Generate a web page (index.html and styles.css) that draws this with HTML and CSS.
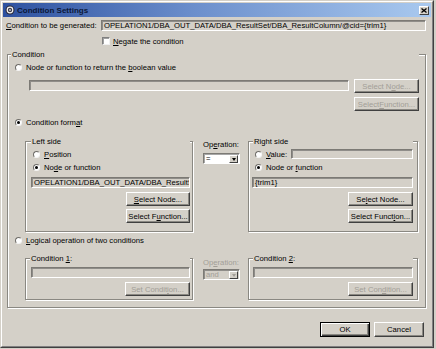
FILE: index.html
```html
<!DOCTYPE html>
<html>
<head>
<meta charset="utf-8">
<title>Condition Settings</title>
<link rel="stylesheet" href="styles.css">
</head>
<body>
<div class="window">
  <div class="frame">
    <div class="titlebar">
      <svg class="app-icon" width="10" height="10" viewBox="0 0 10 10">
        <circle cx="5" cy="5" r="4.5" fill="#2a2a3a"/>
        <circle cx="5" cy="5" r="3.4" fill="#f4f4f4"/>
        <circle cx="5" cy="5" r="2.2" fill="#3a3a4a"/>
        <circle cx="5" cy="5" r="1" fill="#c8c8d0"/>
      </svg>
      <span class="title">Condition Settings</span>
      <span class="close"><svg width="6" height="5" viewBox="0 0 6 5"><path d="M0.5 0.5 L5.5 4.5 M5.5 0.5 L0.5 4.5" stroke="#000" stroke-width="1.3"/></svg></span>
    </div>
    <div class="content">
      <div class="gen-grid">
        <span class="gen-label"><u>C</u>ondition to be generated:</span>
        <div class="field">OPELATION1/DBA_OUT_DATA/DBA_ResultSet/DBA_ResultColumn/@cid={trim1}</div>
        <span></span>
        <div class="check-row"><span class="checkbox"></span><span><u>N</u>egate the condition</span></div>
      </div>

      <div class="group cond-group">
        <div class="group-label cond-label">Condition</div>

        <div class="radio-row r1"><span class="radio"></span><span>Node or function to return the <u>b</u>oolean value</span></div>
        <div class="bool-row">
          <div class="field bool-field"></div>
          <div class="btn-col">
            <div class="btn disabled">Select N<u>o</u>de...</div>
            <div class="btn disabled">Select <u>F</u>unction...</div>
          </div>
        </div>

        <div class="radio-row r2"><span class="radio checked"></span><span>Condition form<u>a</u>t</span></div>
        <div class="side-row mid-row">
          <div class="group left-group">
            <div class="group-label">Left side</div>
            <div class="radio-row lr1"><span class="radio"></span><span><u>P</u>osition</span></div>
            <div class="radio-row lr2"><span class="radio checked"></span><span>No<u>d</u>e or function</span></div>
            <div class="field side-field">OPELATION1/DBA_OUT_DATA/DBA_ResultSet/DBA_ResultColumn/@cid={trim1}</div>
            <div class="btn-stack">
              <div class="btn w64"><span><u>S</u>elect Node...</span></div>
              <div class="btn w64"><span>Select F<u>u</u>nction...</span></div>
            </div>
          </div>
          <div class="op-col">
            <span>Op<u>e</u>ration:</span>
            <div class="combo"><span class="combo-text">=</span><span class="combo-btn"><span class="arrow"></span></span></div>
          </div>
          <div class="group right-group">
            <div class="group-label rlabel">Right side</div>
            <div class="value-row"><span class="radio"></span><span class="value-text"><u>V</u>alue:</span><div class="field value-field"></div></div>
            <div class="radio-row lr2"><span class="radio checked"></span><span>Node or <u>f</u>unction</span></div>
            <div class="field side-field">{trim1}</div>
            <div class="btn-stack">
              <div class="btn w65"><span>Se<u>l</u>ect Node...</span></div>
              <div class="btn w65"><span>Select Funct<u>i</u>on...</span></div>
            </div>
          </div>
        </div>

        <div class="radio-row r3"><span class="radio"></span><span><u>L</u>ogical operation of two conditions</span></div>
        <div class="side-row bot-row">
          <div class="group c1-group">
            <div class="group-label c1label">Condition <u>1</u>:</div>
            <div class="field cfield"></div>
            <div class="btn disabled w65 setbtn">Set Condit<u>i</u>on...</div>
          </div>
          <div class="op-col op-dis">
            <span class="dis-text">Op<u>e</u>ration:</span>
            <div class="combo combo-dis"><span class="combo-text">and</span><span class="combo-btn"><span class="arrow arrow-dis"></span></span></div>
          </div>
          <div class="group c2-group">
            <div class="group-label rlabel">Condition <u>2</u>:</div>
            <div class="field cfield c2field"></div>
            <div class="btn disabled w65 setbtn">Set Con<u>d</u>ition...</div>
          </div>
        </div>
      </div>

      <div class="dialog-buttons">
        <div class="btn default">OK</div>
        <div class="btn dlg">Cancel</div>
      </div>
    </div>
  </div>
</div>
</body>
</html>
```

FILE: styles.css
```css
* { box-sizing: border-box; }
html, body { margin: 0; padding: 0; }
body {
  background: #d4d0c8;
  font-family: "Liberation Sans", Arial, sans-serif;
  font-size: 7.7px;
  line-height: 9px;
  color: #000;
}
u { text-decoration: underline; text-underline-offset: 1px; }

.window {
  width: 434px;
  height: 348px;
  border: 1px solid;
  border-color: #d4d0c8 #404040 #404040 #d4d0c8;
}
.frame {
  height: 100%;
  border: 1px solid;
  border-color: #ffffff #808080 #808080 #ffffff;
  padding: 1px;
  display: flex;
  flex-direction: column;
}

/* title bar */
.titlebar {
  height: 14px;
  display: flex;
  align-items: center;
  padding: 0 2px;
  background: linear-gradient(to right, #2d51a0 0%, #6c8fcc 45%, #a9c9ef 100%);
}
.app-icon { display: block; flex: none; }
.title {
  margin-left: 2px;
  font-weight: bold;
  font-size: 8px;
  color: #0c1838;
  flex: 1;
}
.close {
  width: 10px;
  height: 9px;
  background: #d4d0c8;
  border: 1px solid;
  border-color: #ffffff #404040 #404040 #ffffff;
  display: flex;
  align-items: center;
  justify-content: center;
}
.close svg { display: block; }

/* content */
.content {
  flex: 1;
  display: flex;
  flex-direction: column;
  padding: 0 5px 0 3px;
}
.gen-grid {
  display: grid;
  grid-template-columns: 95px 1fr;
  grid-template-rows: 11px 10px;
  row-gap: 5px;
  margin-top: 3px;
}
.gen-label { align-self: center; white-space: nowrap; }
.check-row { display: flex; align-items: center; gap: 3px; margin-left: 1px; }
.checkbox {
  width: 8px;
  height: 8px;
  background: #fff;
  border: 1px solid;
  border-color: #808080 #f0f0f0 #f0f0f0 #808080;
  box-shadow: inset 1px 1px 0 rgba(64,64,64,0.5);
}

/* fields */
.field {
  height: 11px;
  background: #d4d0c8;
  border: 1px solid;
  border-color: #7c7a75 #ffffff #ffffff #7c7a75;
  box-shadow: inset 1px 1px 0 rgba(60,60,60,0.45);
  padding: 0 2px;
  white-space: nowrap;
  overflow: hidden;
  line-height: 9px;
}

/* group boxes */
.group {
  border: 1px solid #8a8882;
  box-shadow: inset 1px 1px 0 #ffffff, 1px 1px 0 #ffffff;
  display: flex;
  flex-direction: column;
}
.group-label {
  display: table;
  margin-top: -5px;
  height: 10px;
  line-height: 10px;
  padding: 0 1px;
  background: #d4d0c8;
  white-space: nowrap;
}
.cond-group {
  margin: 8px 0 0 1px;
  padding: 0 6px 7px 7px;
}
.cond-label { margin-left: -4px; }

/* radios */
.radio-row {
  display: flex;
  align-items: center;
  height: 9px;
  gap: 4px;
  white-space: nowrap;
}
.radio {
  flex: none;
  position: relative;
  width: 7px;
  height: 7px;
  border-radius: 50%;
  background: #fff;
  border: 1px solid;
  border-color: #6e6c68 #f4f4f4 #f4f4f4 #6e6c68;
}
.radio.checked::after {
  content: "";
  position: absolute;
  left: 1px;
  top: 1px;
  width: 3px;
  height: 3px;
  border-radius: 50%;
  background: #000;
}
.r1 { margin-top: 3px; }
.r2 { margin-top: 7px; }
.r3 { margin-top: 4px; }

.bool-row {
  display: flex;
  gap: 5px;
  margin-top: 7px;
  padding-left: 14px;
}
.bool-field { flex: 1; margin-top: 1px; }
.btn-col { display: flex; flex-direction: column; gap: 4px; width: 65px; }

/* buttons */
.btn {
  height: 14px;
  display: flex;
  align-items: center;
  justify-content: center;
  background: #d4d0c8;
  border: 1px solid;
  border-color: #ffffff #404040 #404040 #ffffff;
  box-shadow: inset -1px -1px 0 #8a8882;
  white-space: nowrap;
}
.btn.disabled { color: #a29e97; }
.w64 { width: 64px; }
.w65 { width: 65px; }

/* side rows */
.side-row {
  display: flex;
  padding-left: 10px;
  padding-right: 1px;
}
.mid-row { margin-top: 14px; }
.bot-row { margin-top: 13px; }

.left-group {
  width: 168px;
  padding: 0 2px 8px 5px;
}
.lr1 { margin-top: 3px; margin-left: 2px; }
.lr2 { margin-top: 4px; margin-left: 2px; }
.side-field { margin-top: 5px; }
.btn-stack {
  display: flex;
  flex-direction: column;
  align-items: flex-end;
  gap: 3px;
  margin-top: 4px;
}

.op-col {
  width: 37px;
  margin-left: 10px;
  margin-top: -1px;
  display: flex;
  flex-direction: column;
  white-space: nowrap;
}
.op-col .combo { margin-top: 4px; }
.op-dis { margin-top: 0; }
.op-dis .combo { margin-top: 2px; }
.dis-text { color: #a29e97; }

.combo {
  height: 11px;
  display: flex;
  background: #fff;
  border: 1px solid;
  border-color: #7c7a75 #ffffff #ffffff #7c7a75;
  box-shadow: inset 1px 1px 0 rgba(60,60,60,0.45);
  padding: 1px 1px 0 2px;
}
.combo-text { flex: 1; line-height: 8px; }
.combo-btn {
  width: 9px;
  height: 8px;
  background: #d4d0c8;
  border: 1px solid;
  border-color: #ffffff #404040 #404040 #ffffff;
  display: flex;
  align-items: center;
  justify-content: center;
}
.arrow {
  width: 0;
  height: 0;
  border-left: 2.5px solid transparent;
  border-right: 2.5px solid transparent;
  border-top: 3px solid #000;
}
.combo-dis { background: #d4d0c8; color: #a29e97; }
.arrow-dis { border-top-color: #a29e97; }

.right-group {
  flex: 1;
  margin-left: 8px;
  padding: 0 4px 8px 3px;
}
.rlabel { margin-left: 1px; }
.value-row {
  display: flex;
  align-items: center;
  height: 10px;
  margin-top: 2px;
  padding-left: 3px;
  white-space: nowrap;
}
.value-text { margin-left: 4px; }
.value-field { flex: 1; height: 10px; margin-left: 4px; }
.right-group .lr2 { margin-left: 3px; }

.c1-group {
  width: 168px;
  padding: 0 2px 3px 5px;
}
.c1label { margin-left: -1px; }
.cfield { margin-top: 3px; }
.setbtn { margin-top: 4px; align-self: flex-end; }
.c2-group {
  flex: 1;
  margin-left: 8px;
  padding: 0 4px 3px 3px;
}
.c2field { margin-left: 1px; }

/* dialog buttons */
.dialog-buttons {
  display: flex;
  justify-content: flex-end;
  gap: 4px;
  margin-top: 14px;
  padding-right: 2px;
}
.dialog-buttons .btn { width: 50px; height: 15px; }
.btn.default {
  border: 1px solid #000;
  box-shadow: inset 1px 1px 0 #ffffff, inset -1px -1px 0 #404040, inset -2px -2px 0 #8a8882;
}
```
